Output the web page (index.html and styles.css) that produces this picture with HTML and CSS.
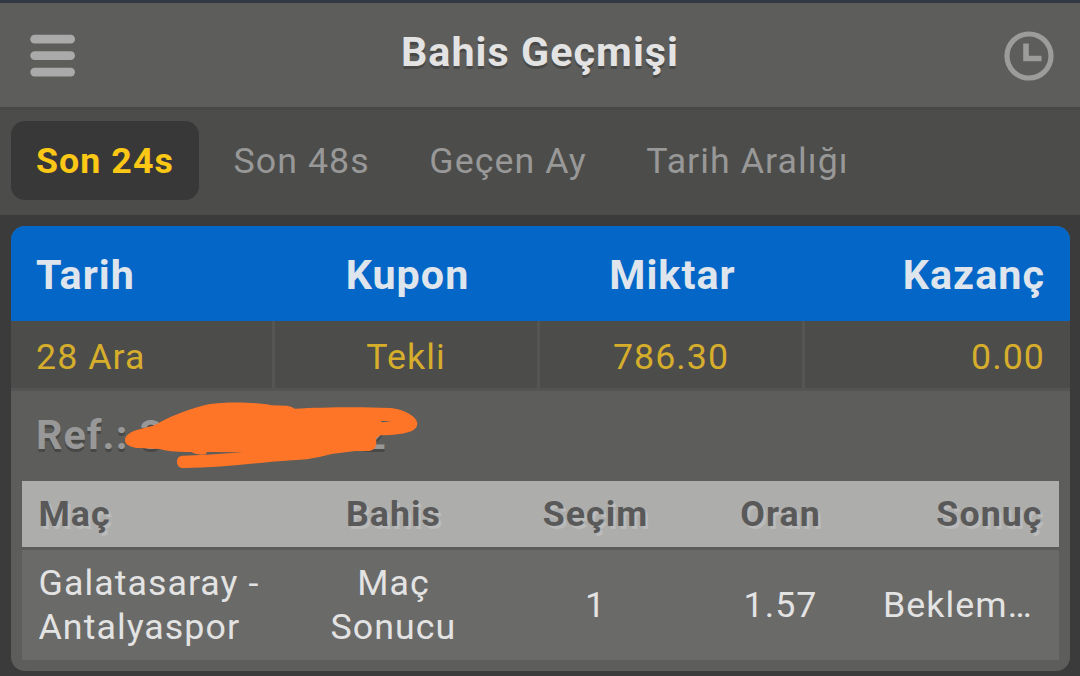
FILE: index.html
```
<!DOCTYPE html>
<html lang="tr">
<head>
    <meta charset="UTF-8">
    <meta name="viewport" content="width=device-width, initial-scale=1.0">
    <title>Bahis Geçmişi</title>
    <link rel="stylesheet" href="styles.css">
</head>
<body>
    <header class="header">
        <svg class="icon" width="46" height="44" viewBox="0 0 46 44" fill="#aaa">
            <rect x="0.3" y="0.8" width="44.7" height="8.8" rx="4.4"/>
            <rect x="0.3" y="17.2" width="44.7" height="8.8" rx="4.4"/>
            <rect x="0.3" y="33.7" width="44.7" height="8.8" rx="4.4"/>
        </svg>
        <h1>Bahis Geçmişi</h1>
        <svg class="icon" width="50" height="50" viewBox="0 0 50 50" fill="none" stroke="#9c9c9a">
            <circle cx="25" cy="25" r="22" stroke-width="5.2"/>
            <path d="M22 12.5V27.5H37.5" stroke-width="5.6"/>
        </svg>
    </header>

    <nav class="tabs">
        <a class="tab active">Son 24s</a>
        <a class="tab">Son 48s</a>
        <a class="tab">Geçen Ay</a>
        <a class="tab">Tarih Aralığı</a>
    </nav>

    <main class="card">
        <div class="row row-head">
            <div>Tarih</div>
            <div>Kupon</div>
            <div>Miktar</div>
            <div>Kazanç</div>
        </div>
        <div class="row row-bet">
            <div>28 Ara</div>
            <div>Tekli</div>
            <div>786.30</div>
            <div>0.00</div>
        </div>

        <div class="ref">
            Ref.: 3<span class="ref-end">2</span>
            <svg class="scribble" width="320" height="90" viewBox="0 0 960 270">
                <path fill="#ff7528" fill-rule="evenodd" d="M45 150C45 135 62 123 95 116C120 110 135 107 150 97C190 75 250 53 295 43C350 34 450 37 485 46L530 47Q545 48 554 56C640 51 760 50 840 54C885 58 924 82 922 102C920 124 890 134 810 136L797 145Q801 156 797 169Q792 182 776 183L735 183L665 192Q625 203 590 208L485 215C400 224 310 233 220 234C207 234 201 226 201 215C201 203 208 197 220 197L290 194L400 187L290 186L288 193Q262 197 243 186Q180 187 148 177L85 174C58 172 45 163 45 150ZM813 95L815 97L846 95L816 92Z"/>
            </svg>
        </div>

        <div class="details">
            <div class="grid grid-head">
                <div>Maç</div>
                <div>Bahis</div>
                <div>Seçim</div>
                <div>Oran</div>
                <div>Sonuç</div>
            </div>
            <div class="grid grid-row">
                <div>Galatasaray -<br>Antalyaspor</div>
                <div>Maç<br>Sonucu</div>
                <div>1</div>
                <div>1.57</div>
                <div class="status">Beklem…</div>
            </div>
        </div>
    </main>
</body>
</html>
```
FILE: styles.css
```
* {
    box-sizing: border-box;
}

body {
    margin: 0;
    height: 676px;
    overflow: hidden;
    background-color: #3b3b3b;
    border-top: 3px solid #303844;
    font-family: Roboto, sans-serif;
    font-size: 35.75px;
    letter-spacing: 1.05px;
    color: #e3e3e3;
}

.header {
    display: flex;
    justify-content: space-between;
    align-items: center;
    height: 107px;
    padding: 1px 26px 0 30px;
    background: #5d5d5b;
    border-bottom: 3px solid #484846;
}

.header h1 {
    margin: 0 0 7px;
    font-size: 41.25px;
    font-weight: bold;
    text-shadow: 0 2.75px 0 #484846;
}

.tabs {
    display: flex;
    height: 105px;
    padding: 11px 11px 15px;
    background: #4c4c4a;
}

.tab {
    display: flex;
    align-items: center;
    padding: 0 25px;
    margin-right: 9.6px;
    color: #989898;
    border-radius: 14px;
}

.tab.active {
    background: #383838;
    color: #fcc816;
    font-weight: bold;
}

.card {
    position: relative;
    margin: 11px 10px 0 11px;
    height: 445px;
    background: #5d5d5b;
    border-radius: 14px;
    overflow: hidden;
}

.row {
    display: grid;
    grid-template-columns: 264px 265px 265px 1fr;
    text-align: center;
}

.row div {
    display: flex;
    align-items: center;
    justify-content: center;
    padding: 2px 25px 0;
}

.row div:first-child {
    justify-content: flex-start;
}

.row div:last-child {
    justify-content: flex-end;
    border-right: none;
}

.row-head {
    height: 95px;
    background: #0467c7;
    font-size: 41.25px;
    font-weight: bold;
    color: #dfe5ec;
}

.row-bet {
    height: 70px;
    background: #4c4c4a;
    border-bottom: 3px solid #545454;
    color: #d6ae2c;
}

.row-bet div {
    padding-top: 4px;
    border-right: 3px solid #555553;
}

.ref {
    height: 90px;
    padding-left: 25px;
    line-height: 88px;
    font-size: 41.25px;
    font-weight: bold;
    color: #989898;
    text-shadow: 0 2.75px 0 #484846;
}

.ref-end {
    margin-left: 198px;
}

/* marker over the reference number */
.scribble {
    position: absolute;
    left: 99px;
    top: 164px;
}

.details {
    margin: 0 11px;
}

.grid {
    display: grid;
    grid-template-columns: 278px 187px 217px 153px 1fr;
    align-items: center;
    text-align: center;
}

.grid div:first-child {
    padding-left: 16.5px;
    text-align: left;
}

.grid div:last-child {
    padding-right: 16.5px;
    text-align: right;
}

.grid-head {
    height: 69px;
    background: #adadab;
    border-bottom: 3px solid #5b5b5b;
    font-weight: bold;
    color: #595959;
    text-shadow: 2.75px 2.75px 0 #bbb;
}

.grid-row {
    height: 110px;
    background: #6a6a68;
    line-height: 44px;
}

.grid div.status {
    padding-left: 26px;
    padding-right: 0;
    text-align: left;
}
```
